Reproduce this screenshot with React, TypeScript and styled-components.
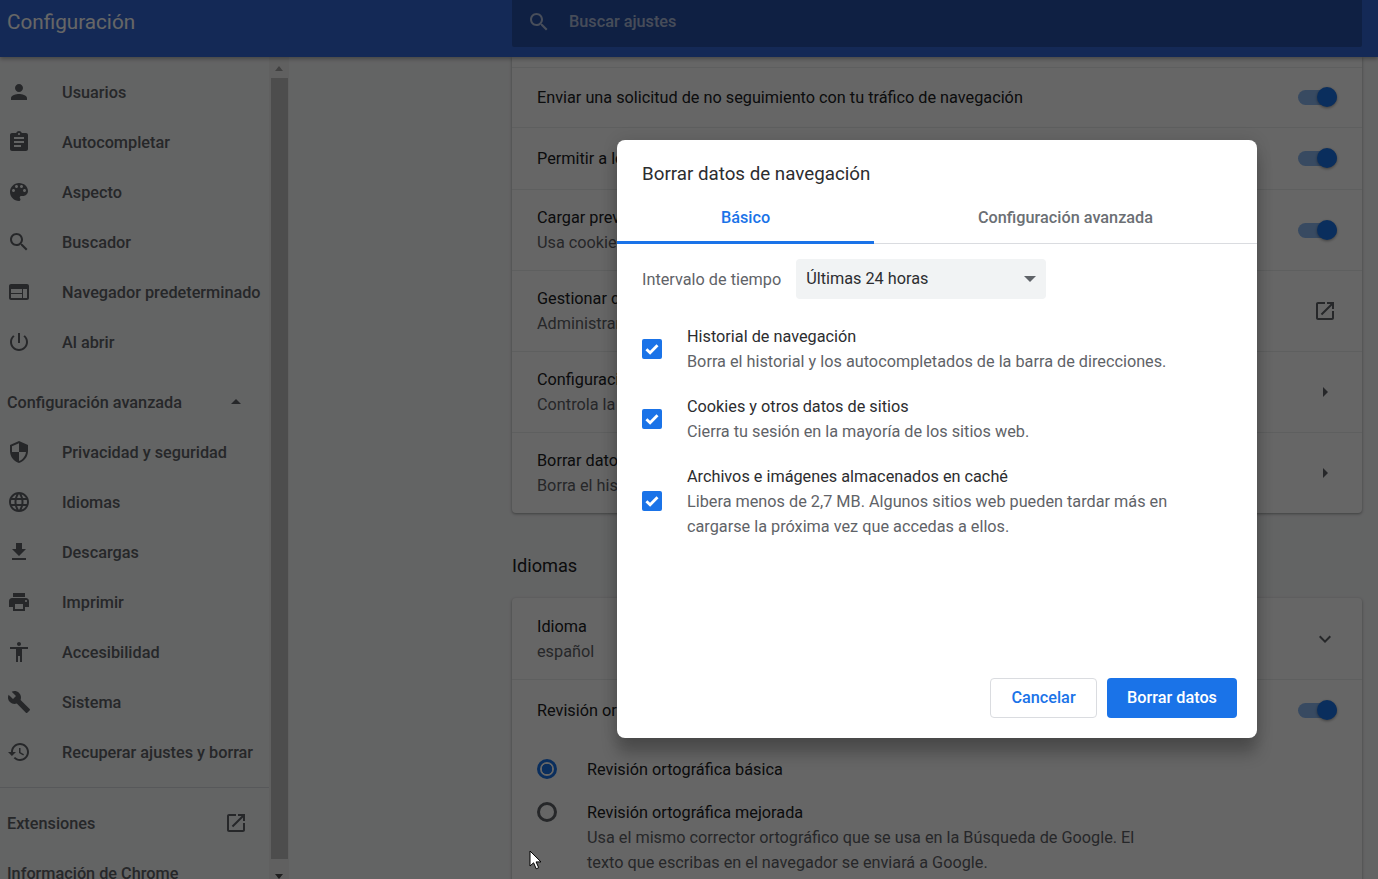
import React from 'react';
import styled, { createGlobalStyle } from 'styled-components';

const ICONS: Record<string, string> = {
  person: 'M12 12c2.21 0 4-1.79 4-4s-1.79-4-4-4-4 1.79-4 4 1.79 4 4 4zm0 2c-2.67 0-8 1.34-8 4v2h16v-2c0-2.66-5.33-4-8-4z',
  assignment: 'M19 3h-4.18C14.4 1.84 13.3 1 12 1c-1.3 0-2.4.84-2.82 2H5c-1.1 0-2 .9-2 2v14c0 1.1.9 2 2 2h14c1.1 0 2-.9 2-2V5c0-1.1-.9-2-2-2zm-7 0c.55 0 1 .45 1 1s-.45 1-1 1-1-.45-1-1 .45-1 1-1zm2 14H7v-2h7v2zm3-4H7v-2h10v2zm0-4H7V7h10v2z',
  palette: 'M12 3c-4.97 0-9 4.03-9 9s4.03 9 9 9c.83 0 1.5-.67 1.5-1.5 0-.39-.15-.74-.39-1.01-.23-.26-.38-.61-.38-.99 0-.83.67-1.5 1.5-1.5H16c2.76 0 5-2.24 5-5 0-4.42-4.03-8-9-8zm-5.5 9c-.83 0-1.5-.67-1.5-1.5S5.67 9 6.5 9 8 9.67 8 10.5 7.33 12 6.5 12zm3-4C8.67 8 8 7.33 8 6.5S8.67 5 9.5 5s1.5.67 1.5 1.5S10.33 8 9.5 8zm5 0c-.83 0-1.5-.67-1.5-1.5S13.67 5 14.5 5s1.5.67 1.5 1.5S15.33 8 14.5 8zm3 4c-.83 0-1.5-.67-1.5-1.5S16.67 9 17.5 9s1.5.67 1.5 1.5-.67 1.5-1.5 1.5z',
  search: 'M15.5 14h-.79l-.28-.27C15.41 12.59 16 11.11 16 9.5 16 5.91 13.09 3 9.5 3S3 5.91 3 9.5 5.91 16 9.5 16c1.61 0 3.09-.59 4.23-1.57l.27.28v.79l5 4.99L20.49 19l-4.99-5zm-6 0C7.01 14 5 11.99 5 9.5S7.01 5 9.5 5 14 7.01 14 9.5 11.99 14 9.5 14z',
  web: 'M20 4H4c-1.1 0-1.99.9-1.99 2L2 18c0 1.1.9 2 2 2h16c1.1 0 2-.9 2-2V6c0-1.1-.9-2-2-2zm-5 14H4v-4h11v4zm0-5H4V9h11v4zm5 5h-4V9h4v9z',
  power: 'M13 3h-2v10h2V3zm4.83 2.17l-1.42 1.42C17.99 7.86 19 9.81 19 12c0 3.87-3.13 7-7 7s-7-3.13-7-7c0-2.19 1.01-4.14 2.58-5.42L6.17 5.17C4.23 6.82 3 9.26 3 12c0 4.97 4.03 9 9 9s9-4.03 9-9c0-2.74-1.23-5.18-3.17-6.83z',
  security: 'M12 1L3 5v6c0 5.55 3.84 10.74 9 12 5.16-1.26 9-6.45 9-12V5l-9-4zm0 10.99h7c-.53 4.12-3.28 7.79-7 8.94V12H5V6.3l7-3.11v8.8z',
  language: 'M11.99 2C6.47 2 2 6.48 2 12s4.47 10 9.99 10C17.52 22 22 17.52 22 12S17.52 2 11.99 2zm6.93 6h-2.95c-.32-1.25-.78-2.45-1.38-3.56 1.84.63 3.37 1.91 4.33 3.56zM12 4.04c.83 1.2 1.48 2.53 1.91 3.96h-3.82c.43-1.43 1.08-2.76 1.91-3.96zM4.26 14C4.1 13.36 4 12.69 4 12s.1-1.36.26-2h3.38c-.08.66-.14 1.32-.14 2 0 .68.06 1.34.14 2H4.26zm.82 2h2.95c.32 1.25.78 2.45 1.38 3.56-1.84-.63-3.37-1.9-4.33-3.56zm2.95-8H5.08c.96-1.66 2.49-2.93 4.33-3.56C8.81 5.55 8.35 6.75 8.03 8zM12 19.96c-.83-1.2-1.48-2.53-1.91-3.96h3.82c-.43 1.43-1.08 2.76-1.91 3.96zM14.34 14H9.66c-.09-.66-.16-1.32-.16-2 0-.68.07-1.35.16-2h4.68c.09.65.16 1.32.16 2 0 .68-.07 1.34-.16 2zm.25 5.56c.6-1.11 1.06-2.31 1.38-3.56h2.95c-.96 1.65-2.49 2.93-4.33 3.56zM16.36 14c.08-.66.14-1.32.14-2 0-.68-.06-1.34-.14-2h3.38c.16.64.26 1.31.26 2s-.1 1.36-.26 2h-3.38z',
  download: 'M19 9h-4V3H9v6H5l7 7 7-7zM5 18v2h14v-2H5z',
  print: 'M19 8H5c-1.66 0-3 1.34-3 3v6h4v4h12v-4h4v-6c0-1.66-1.34-3-3-3zm-3 11H8v-5h8v5zm3-7c-.55 0-1-.45-1-1s.45-1 1-1 1 .45 1 1-.45 1-1 1zm-1-9H6v4h12V3z',
  accessibility: 'M12 2c1.1 0 2 .9 2 2s-.9 2-2 2-2-.9-2-2 .9-2 2-2zm9 7h-6v13h-2v-6h-2v6H9V9H3V7h18v2z',
  build: 'M22.7 19l-9.1-9.1c.9-2.3.4-5-1.5-6.9-2-2-5-2.4-7.4-1.3L9 6 6 9 1.6 4.7C.4 7.1.9 10.1 2.9 12.1c1.9 1.9 4.6 2.4 6.9 1.5l9.1 9.1c.4.4 1 .4 1.4 0l2.3-2.3c.5-.4.5-1.1.1-1.4z',
  restore: 'M13 3c-4.97 0-9 4.03-9 9H1l3.89 3.89.07.14L9 12H6c0-3.87 3.13-7 7-7s7 3.13 7 7-3.13 7-7 7c-1.93 0-3.68-.79-4.94-2.06l-1.42 1.42C8.27 19.99 10.51 21 13 21c4.97 0 9-4.03 9-9s-4.03-9-9-9zm-1 5v5l4.28 2.54.72-1.21-3.5-2.08V8H12z',
  open: 'M19 19H5V5h7V3H5c-1.11 0-2 .9-2 2v14c0 1.1.89 2 2 2h14c1.1 0 2-.9 2-2v-7h-2v7zM14 3v2h3.59l-9.83 9.83 1.41 1.41L19 6.41V10h2V3h-7z',
  arrowUp: 'M7 14l5-5 5 5z',
  arrowRight: 'M10 17l5-5-5-5v10z',
  expand: 'M16.59 8.59L12 13.17 7.41 8.59 6 10l6 6 6-6z',
};

const MENU_TOP = [
  ['person', 'Usuarios'],
  ['assignment', 'Autocompletar'],
  ['palette', 'Aspecto'],
  ['search', 'Buscador'],
  ['web', 'Navegador predeterminado'],
  ['power', 'Al abrir'],
];

const MENU_ADVANCED = [
  ['security', 'Privacidad y seguridad'],
  ['language', 'Idiomas'],
  ['download', 'Descargas'],
  ['print', 'Imprimir'],
  ['accessibility', 'Accesibilidad'],
  ['build', 'Sistema'],
  ['restore', 'Recuperar ajustes y borrar'],
];

const CHECKS = [
  { title: 'Historial de navegación', lines: ['Borra el historial y los autocompletados de la barra de direcciones.'] },
  { title: 'Cookies y otros datos de sitios', lines: ['Cierra tu sesión en la mayoría de los sitios web.'] },
  {
    title: 'Archivos e imágenes almacenados en caché',
    lines: ['Libera menos de 2,7 MB. Algunos sitios web pueden tardar más en', 'cargarse la próxima vez que accedas a ellos.'],
  },
];

function Icon({ name, size = 24 }: { name: string; size?: number }) {
  return (
    <IconSvg viewBox="0 0 24 24" width={size} height={size}>
      <path d={ICONS[name]} />
    </IconSvg>
  );
}

function Toggle() {
  return (
    <ToggleTrack>
      <ToggleKnob />
    </ToggleTrack>
  );
}

function App() {
  return (
    <Page>
      <GlobalStyle />
      <Header>
        <HeaderTitle>Configuración</HeaderTitle>
        <SearchBox>
          <SearchIcon>
            <Icon name="search" />
          </SearchIcon>
          <SearchText>Buscar ajustes</SearchText>
        </SearchBox>
      </Header>
      <Body>
        <Sidebar>
          <Menu>
            {MENU_TOP.map(([icon, label]) => (
              <MenuItem key={label}>
                <MenuIcon>
                  <Icon name={icon} />
                </MenuIcon>
                {label}
              </MenuItem>
            ))}
            <MenuHead $spaced>
              Configuración avanzada
              <HeadIcon>
                <Icon name="arrowUp" />
              </HeadIcon>
            </MenuHead>
            {MENU_ADVANCED.map(([icon, label]) => (
              <MenuItem key={label}>
                <MenuIcon>
                  <Icon name={icon} />
                </MenuIcon>
                {label}
              </MenuItem>
            ))}
            <MenuDivider />
            <MenuHead>
              Extensiones
              <HeadIcon>
                <Icon name="open" />
              </HeadIcon>
            </MenuHead>
            <MenuHead>Información de Chrome</MenuHead>
          </Menu>
          <Scrollbar>
            <ScrollArrow />
            <ScrollThumb />
            <ScrollArrow $down />
          </Scrollbar>
        </Sidebar>
        <Main>
          <Card>
            <Row $h={10} />
            <Row $h={60}>
              <RowText>
                <RowTitle>Enviar una solicitud de no seguimiento con tu tráfico de navegación</RowTitle>
              </RowText>
              <Toggle />
            </Row>
            <Row $h={62}>
              <RowText>
                <RowTitle>Permitir a los sitios web comprobar si tienes métodos de pago guardados</RowTitle>
              </RowText>
              <Toggle />
            </Row>
            <Row $h={81}>
              <RowText>
                <RowTitle>Cargar previamente las páginas para acelerar la navegación</RowTitle>
                <RowSub>Usa cookies para recordar tus preferencias</RowSub>
              </RowText>
              <Toggle />
            </Row>
            <Row $h={81}>
              <RowText>
                <RowTitle>Gestionar certificados</RowTitle>
                <RowSub>Administrar certificados y ajustes de HTTPS</RowSub>
              </RowText>
              <RowIcon>
                <Icon name="open" />
              </RowIcon>
            </Row>
            <Row $h={81}>
              <RowText>
                <RowTitle>Configuración de sitios</RowTitle>
                <RowSub>Controla la información que pueden usar los sitios web</RowSub>
              </RowText>
              <RowIcon>
                <Icon name="arrowRight" />
              </RowIcon>
            </Row>
            <Row $h={81}>
              <RowText>
                <RowTitle>Borrar datos de navegación</RowTitle>
                <RowSub>Borra el historial, las cookies, la caché y mucho más</RowSub>
              </RowText>
              <RowIcon>
                <Icon name="arrowRight" />
              </RowIcon>
            </Row>
          </Card>
          <SectionTitle>Idiomas</SectionTitle>
          <Card>
            <Row $h={81}>
              <RowText>
                <RowTitle>Idioma</RowTitle>
                <RowSub>español</RowSub>
              </RowText>
              <RowIcon>
                <Icon name="expand" />
              </RowIcon>
            </Row>
            <Row $h={62}>
              <RowText>
                <RowTitle>Revisión ortográfica</RowTitle>
              </RowText>
              <Toggle />
            </Row>
            <RadioGroup>
              <RadioRow>
                <Radio $on />
                <RowText>
                  <RowTitle>Revisión ortográfica básica</RowTitle>
                </RowText>
              </RadioRow>
              <RadioRow>
                <Radio />
                <RowText>
                  <RowTitle>Revisión ortográfica mejorada</RowTitle>
                  <RowSub>Usa el mismo corrector ortográfico que se usa en la Búsqueda de Google. El</RowSub>
                  <RowSub>texto que escribas en el navegador se enviará a Google.</RowSub>
                </RowText>
              </RadioRow>
            </RadioGroup>
          </Card>
        </Main>
      </Body>
      <Overlay>
        <Dialog>
          <DialogTitle>Borrar datos de navegación</DialogTitle>
          <Tabs>
            <Tab $active $w={257}>Básico</Tab>
            <Tab $w={383}>Configuración avanzada</Tab>
          </Tabs>
          <DialogBody>
            <TimeRow>
              <TimeLabel>Intervalo de tiempo</TimeLabel>
              <Select>
                Últimas 24 horas
                <SelectArrow />
              </Select>
            </TimeRow>
            <CheckList>
              {CHECKS.map((c) => (
                <CheckRow key={c.title}>
                  <CheckBox>
                    <svg viewBox="0 0 20 20" width="20" height="20">
                      <path d="M4.4 10.2l3.7 3.6 7.4-7.6" fill="none" stroke="#fff" strokeWidth="2.8" />
                    </svg>
                  </CheckBox>
                  <div>
                    <CheckTitle>{c.title}</CheckTitle>
                    {c.lines.map((l) => (
                      <CheckSub key={l}>{l}</CheckSub>
                    ))}
                  </div>
                </CheckRow>
              ))}
            </CheckList>
          </DialogBody>
          <DialogFooter>
            <CancelButton>Cancelar</CancelButton>
            <ConfirmButton>Borrar datos</ConfirmButton>
          </DialogFooter>
        </Dialog>
        <Cursor viewBox="0 0 14 20" width="14" height="20">
          <path d="M1 1v15l3.6-3.2 2.6 6 2.5-1.1-2.6-5.8h4.9z" fill="#fff" stroke="#000" strokeWidth="1" />
        </Cursor>
      </Overlay>
    </Page>
  );
}

export default App;

const GlobalStyle = createGlobalStyle`
  html, body {
    margin: 0;
    height: 100%;
    overflow: hidden;
  }
  body {
    font-family: Roboto, "Liberation Sans", sans-serif;
    font-size: 16.25px;
    background: #f8f9fa;
  }
`;

const Page = styled.div`
  position: relative;
  width: 1378px;
  height: 879px;
  overflow: hidden;
  display: flex;
  flex-direction: column;
  background: #f8f9fa;
`;

const IconSvg = styled.svg`
  display: block;
  fill: currentColor;
`;

const Header = styled.header`
  position: relative;
  z-index: 1;
  flex: none;
  height: 57px;
  background: #3367d6;
  box-shadow: 0 2px 4px rgba(0, 0, 0, 0.3);
  display: flex;
  align-items: flex-start;
`;

const HeaderTitle = styled.div`
  width: 512px;
  padding-left: 7px;
  box-sizing: border-box;
  font-size: 20.7px;
  line-height: 45px;
  color: #fff;
`;

const SearchBox = styled.div`
  width: 850px;
  height: 47px;
  background: rgba(0, 0, 0, 0.22);
  border-radius: 0 0 2px 2px;
  display: flex;
  align-items: center;
  padding-bottom: 3px;
  box-sizing: border-box;
`;

const SearchIcon = styled.div`
  margin-left: 15px;
  color: rgba(255, 255, 255, 0.65);
`;

const SearchText = styled.div`
  margin: 0 0 1px 18px;
  font-weight: 500;
  color: rgba(255, 255, 255, 0.65);
`;

const Body = styled.div`
  flex: 1;
  min-height: 0;
  display: flex;
`;

const Sidebar = styled.nav`
  flex: none;
  width: 289px;
  display: flex;
  overflow: hidden;
`;

const Menu = styled.div`
  width: 269px;
  padding-top: 10px;
  flex: none;
`;

const MenuItem = styled.div`
  height: 50px;
  display: flex;
  align-items: center;
  padding-left: 7px;
  font-weight: 500;
  color: #5f6368;
  white-space: nowrap;
`;

const MenuIcon = styled.span`
  width: 55px;
  flex: none;
`;

const MenuHead = styled.div<{ $spaced?: boolean }>`
  height: 50px;
  margin-top: ${(p) => (p.$spaced ? 10 : 0)}px;
  display: flex;
  align-items: center;
  justify-content: space-between;
  padding: 0 21px 0 7px;
  font-weight: 500;
  color: #5f6368;
  white-space: nowrap;
`;

const HeadIcon = styled.span`
  flex: none;
`;

const MenuDivider = styled.div`
  height: 1px;
  margin: 10px 0 10px;
  background: #dadce0;
`;

const Scrollbar = styled.div`
  width: 20px;
  flex: none;
  background: #f1f1f1;
  display: flex;
  flex-direction: column;
  align-items: center;
`;

const ScrollArrow = styled.div<{ $down?: boolean }>`
  flex: none;
  height: 21px;
  width: 17px;
  position: relative;
  &::after {
    content: '';
    position: absolute;
    left: 4px;
    ${(p) => (p.$down ? 'top: 15px;' : 'top: 9px;')}
    border-left: 4px solid transparent;
    border-right: 4px solid transparent;
    ${(p) => (p.$down ? 'border-top: 5px solid #505050;' : 'border-bottom: 5px solid #a3a3a3;')}
  }
`;

const ScrollThumb = styled.div`
  flex: none;
  width: 17px;
  height: 781px;
  background: #c1c1c1;
`;

const Main = styled.main`
  flex: none;
  width: 850px;
  margin-left: 223px;
`;

const Card = styled.section`
  background: #fff;
  border-radius: 0 0 4px 4px;
  box-shadow: 0 1px 2px rgba(60, 64, 67, 0.3), 0 1px 3px 1px rgba(60, 64, 67, 0.15);
  & + h2 + & {
    border-radius: 4px;
  }
`;

const Row = styled.div<{ $h: number }>`
  height: ${(p) => p.$h}px;
  box-sizing: border-box;
  padding: 0 25px;
  display: flex;
  align-items: center;
  justify-content: space-between;
  border-top: 1px solid #eceded;
  &:first-child {
    border-top: none;
  }
`;

const RowText = styled.div`
  line-height: 25px;
`;

const RowTitle = styled.div`
  color: #202124;
`;

const RowSub = styled.div`
  color: #5f6368;
`;

const RowIcon = styled.span`
  color: #5f6368;
`;

const ToggleTrack = styled.span`
  position: relative;
  display: block;
  width: 39px;
  height: 15px;
  border-radius: 8px;
  background: #8cb9f3;
`;

const ToggleKnob = styled.span`
  position: absolute;
  right: 0;
  top: -3px;
  width: 20px;
  height: 20px;
  border-radius: 50%;
  background: #1a73e8;
  box-shadow: 0 1px 3px rgba(0, 0, 0, 0.4);
`;

const SectionTitle = styled.h2`
  margin: 0;
  height: 85px;
  line-height: 105px;
  font-size: 18.2px;
  font-weight: 400;
  color: #202124;
`;

const RadioGroup = styled.div`
  padding: 16px 25px 40px;
  display: flex;
  flex-direction: column;
  gap: 18px;
`;

const RadioRow = styled.div`
  display: flex;
  gap: 30px;
`;

const Radio = styled.span<{ $on?: boolean }>`
  flex: none;
  box-sizing: border-box;
  width: 20px;
  height: 20px;
  margin-top: 2px;
  border-radius: 50%;
  border: 3px solid ${(p) => (p.$on ? '#1a73e8' : '#5f6368')};
  background: ${(p) => (p.$on ? 'radial-gradient(circle, #1a73e8 0 5px, transparent 5.5px)' : 'none')};
`;

const Overlay = styled.div`
  position: absolute;
  inset: 0;
  z-index: 2;
  background: rgba(0, 0, 0, 0.6);
`;

const Dialog = styled.div`
  position: absolute;
  left: 617px;
  top: 140px;
  width: 640px;
  height: 598px;
  box-sizing: border-box;
  background: #fff;
  border-radius: 8px;
  box-shadow: 0 0 16px rgba(0, 0, 0, 0.12), 0 16px 16px rgba(0, 0, 0, 0.24);
  display: flex;
  flex-direction: column;
`;

const DialogTitle = styled.div`
  padding: 22px 25px 0;
  font-size: 18.75px;
  line-height: 24px;
  color: #2c2d30;
`;

const Tabs = styled.div`
  display: flex;
  margin-top: 12px;
  border-bottom: 1px solid #dadce0;
`;

const Tab = styled.div<{ $active?: boolean; $w: number }>`
  width: ${(p) => p.$w}px;
  height: 43px;
  margin-bottom: -1px;
  text-align: center;
  line-height: 40px;
  font-weight: 500;
  color: ${(p) => (p.$active ? '#1a73e8' : '#6b6f74')};
  border-bottom: 3px solid ${(p) => (p.$active ? '#1a73e8' : 'transparent')};
`;

const DialogBody = styled.div`
  padding: 15px 25px 0 25px;
  flex: 1;
`;

const TimeRow = styled.div`
  display: flex;
  align-items: center;
  gap: 15px;
`;

const TimeLabel = styled.div`
  color: #5f6368;
`;

const Select = styled.div`
  position: relative;
  box-sizing: border-box;
  width: 250px;
  height: 40px;
  padding-left: 10px;
  line-height: 40px;
  border-radius: 4px;
  background: #f1f3f4;
  color: #2c2d30;
`;

const SelectArrow = styled.span`
  position: absolute;
  right: 10px;
  top: 17px;
  border-left: 6px solid transparent;
  border-right: 6px solid transparent;
  border-top: 6px solid #5f6368;
`;

const CheckList = styled.div`
  margin-top: 25px;
  display: flex;
  flex-direction: column;
  gap: 20px;
`;

const CheckRow = styled.div`
  display: flex;
  align-items: center;
  gap: 25px;
  line-height: 25px;
`;

const CheckBox = styled.span`
  flex: none;
  width: 20px;
  height: 20px;
  margin-bottom: 1px;
  border-radius: 2px;
  background: #1a73e8;
`;

const CheckTitle = styled.div`
  color: #2c2d30;
`;

const CheckSub = styled.div`
  color: #5f6368;
`;

const DialogFooter = styled.div`
  padding: 0 20px 20px;
  display: flex;
  justify-content: flex-end;
  gap: 10px;
`;

const CancelButton = styled.button`
  width: 107px;
  height: 40px;
  padding: 0 0 2px;
  border: 1px solid #dadce0;
  border-radius: 4px;
  background: #fff;
  color: #1a73e8;
  font: 500 16.25px Roboto, sans-serif;
`;

const ConfirmButton = styled.button`
  width: 130px;
  height: 40px;
  padding: 0 0 2px;
  border: none;
  border-radius: 4px;
  background: #1a73e8;
  color: #fff;
  font: 500 16.25px Roboto, sans-serif;
`;

const Cursor = styled.svg`
  position: absolute;
  left: 529px;
  top: 850px;
`;
